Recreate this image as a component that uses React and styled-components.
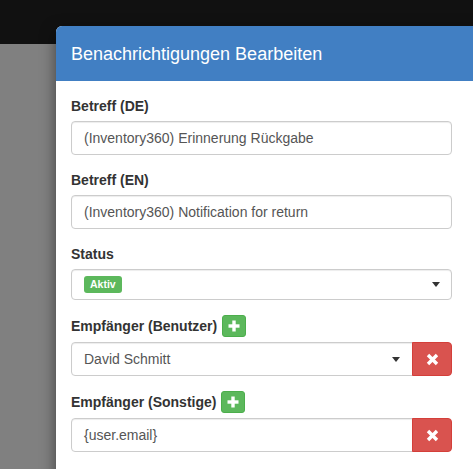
import React from "react";
import styled, { createGlobalStyle } from "styled-components";

const GlobalStyle = createGlobalStyle`
  html, body {
    margin: 0;
    padding: 0;
    height: 100%;
    overflow: hidden;
  }
  body {
    background: #808080;
    font-family: "Liberation Sans", Arial, Helvetica, sans-serif;
    font-size: 14px;
    line-height: 20px;
    color: #333;
  }
  * { box-sizing: border-box; }
`;

const Page = styled.div`
  position: relative;
  width: 473px;
  height: 469px;
  overflow: hidden;
  background: #808080;
`;

const Navbar = styled.div`
  height: 44px;
  background: #111;
`;

const Modal = styled.div`
  position: absolute;
  left: 56px;
  top: 26px;
  width: 440px;
  background: #fff;
  border-radius: 6px 6px 0 0;
  box-shadow: 0 5px 15px rgba(0, 0, 0, 0.5);
  overflow: hidden;
`;

const Header = styled.div`
  background: #417fc3;
  padding: 16px 15px 15px;
  height: 55px;
`;

const Title = styled.h4`
  margin: 0;
  font-size: 18px;
  line-height: 24px;
  font-weight: 400;
  color: #fff;
`;

const Body = styled.div`
  padding: 15px;
  height: 400px;
`;

const Form = styled.div`
  width: 381px;
  display: flex;
  flex-direction: column;
  gap: 15px;
`;

const Group = styled.div`
  display: flex;
  flex-direction: column;
  gap: 5px;
`;

const LabelRow = styled.div`
  display: flex;
  align-items: center;
  gap: 5px;
  height: ${(p) => (p.$withButton ? "22px" : "20px")};
`;

const Label = styled.label`
  font-weight: 700;
  font-size: 14px;
  line-height: 20px;
  color: #333;
`;

const Field = styled.div`
  display: flex;
  align-items: center;
  justify-content: space-between;
  height: 34px;
  flex: 1;
  min-width: 0;
  padding: 6px 12px;
  border: 1px solid #ccc;
  border-radius: ${(p) => (p.$grouped ? "4px 0 0 4px" : "4px")};
  box-shadow: inset 0 1px 1px rgba(0, 0, 0, 0.075);
  background: #fff;
  font-size: 14px;
  line-height: 20px;
  color: #555;
  white-space: nowrap;
`;

const Caret = styled.span`
  width: 0;
  height: 0;
  border-left: 4px solid transparent;
  border-right: 4px solid transparent;
  border-top: 5px solid #333;
  margin-right: ${(p) => p.$offset || 0}px;
`;

const InputGroup = styled.div`
  display: flex;
  height: 34px;
`;

const DangerButton = styled.button`
  width: 40px;
  height: 34px;
  margin-left: -1px;
  padding: 0;
  display: flex;
  align-items: center;
  justify-content: center;
  background: #d9534f;
  border: 1px solid #d43f3a;
  border-radius: 0 4px 4px 0;
  cursor: pointer;
`;

const AddButton = styled.button`
  width: 24px;
  height: 22px;
  padding: 0;
  display: flex;
  align-items: center;
  justify-content: center;
  background: #5cb85c;
  border: 1px solid #4cae4c;
  border-radius: 3px;
  cursor: pointer;
`;

const Badge = styled.span`
  display: inline-block;
  padding: 3px 6px 3px;
  font-size: 10.5px;
  line-height: 11px;
  font-weight: 700;
  color: #fff;
  background: #5cb85c;
  border-radius: 3px;
`;

const PlusIcon = () => (
  <svg width="12" height="12" viewBox="0 0 12 12" aria-hidden="true">
    <rect x="4.3" y="0.5" width="3.4" height="11" fill="#fff" />
    <rect x="0.5" y="4.3" width="11" height="3.4" fill="#fff" />
  </svg>
);

const RemoveIcon = () => (
  <svg width="13" height="13" viewBox="0 0 13 13" aria-hidden="true">
    <path
      d="M2 2 L11 11 M11 2 L2 11"
      stroke="#fff"
      strokeWidth="3.4"
      strokeLinecap="butt"
      fill="none"
    />
  </svg>
);

export default function App() {
  return (
    <>
      <GlobalStyle />
      <Page>
        <Navbar />
        <Modal>
          <Header>
            <Title>Benachrichtigungen Bearbeiten</Title>
          </Header>
          <Body>
            <Form>
              <Group>
                <LabelRow>
                  <Label>Betreff (DE)</Label>
                </LabelRow>
                <Field>(Inventory360) Erinnerung Rückgabe</Field>
              </Group>
              <Group>
                <LabelRow>
                  <Label>Betreff (EN)</Label>
                </LabelRow>
                <Field>(Inventory360) Notification for return</Field>
              </Group>
              <Group>
                <LabelRow>
                  <Label>Status</Label>
                </LabelRow>
                <Field>
                  <Badge>Aktiv</Badge>
                  <Caret $offset={-1} />
                </Field>
              </Group>
              <Group>
                <LabelRow $withButton>
                  <Label>Empfänger (Benutzer)</Label>
                  <AddButton>
                    <PlusIcon />
                  </AddButton>
                </LabelRow>
                <InputGroup>
                  <Field $grouped>
                    <span>David Schmitt</span>
                    <Caret $offset={0} />
                  </Field>
                  <DangerButton>
                    <RemoveIcon />
                  </DangerButton>
                </InputGroup>
              </Group>
              <Group>
                <LabelRow $withButton>
                  <Label>Empfänger (Sonstige)</Label>
                  <AddButton>
                    <PlusIcon />
                  </AddButton>
                </LabelRow>
                <InputGroup>
                  <Field $grouped>{"{user.email}"}</Field>
                  <DangerButton>
                    <RemoveIcon />
                  </DangerButton>
                </InputGroup>
              </Group>
            </Form>
          </Body>
        </Modal>
      </Page>
    </>
  );
}
